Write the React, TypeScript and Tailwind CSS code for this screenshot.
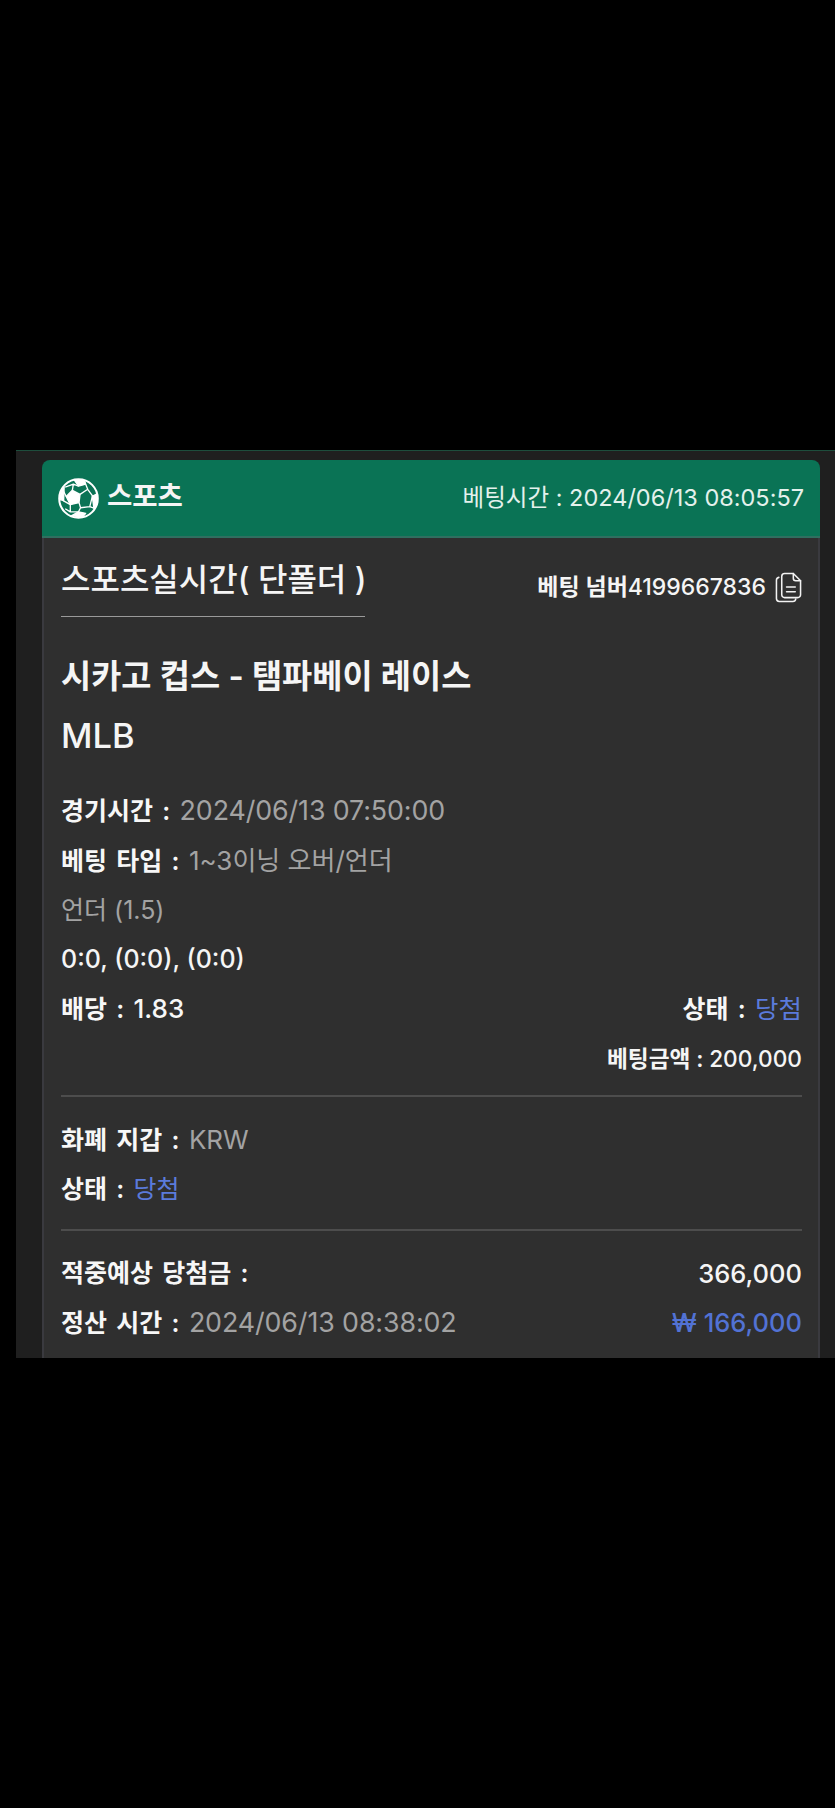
function BallIcon() {
  return (
    <svg viewBox="0 0 40 40" className="w-[41px] h-[41px]" fill="#ffffff" stroke="#ffffff" strokeWidth="1.3" strokeLinejoin="round">
      <circle cx="20" cy="20" r="18.800" fill="none" strokeWidth="2" />
      <path d="M14 12l7.500 4-1 8-8.500 2-4-8z" />
      <path d="M16 2l10 .5 1 3.500-7 2z" />
      <path d="M38 15.500l.5 9-3.500 5-1.500-11.500z" />
      <path d="M13 37l11 1 3-3.500-7-1.500z" />
      <path d="M3.500 10.500l2.500-1.500-.5 13-3.500-1z" />
      <path fill="none" d="M21.500 16l7.500-5 5 7M29 11l-2-5M33.500 18l-2.500 10-9 1-1.500-5M31 28l4 1.500M22 29l-2 4M12 26v7l8 0M12 33l-5-3M12 26l-7-4M8 18l-3-6M14 12l1-6 5 2M15 6l-8 3" />
    </svg>
  );
}

function CopyIcon() {
  return (
    <svg viewBox="0 0 28 32" className="w-[27px] h-[31px] ml-[9px]" fill="none" stroke="#f2f2f2" strokeWidth="1.6" strokeLinejoin="round" strokeLinecap="round">
      <path d="M10 1.500h9l7.500 7.500v14.500a3 3 0 0 1-3 3H10a3 3 0 0 1-3-3v-19a3 3 0 0 1 3-3z" />
      <path d="M19 1.500v5a2.500 2.500 0 0 0 2.500 2.500h5" />
      <path d="M4 5.500a3 3 0 0 0-2.500 3v19a3 3 0 0 0 3 3h14a3 3 0 0 0 3-2.500" />
      <path d="M12 15.500h9M12 20.500h9" />
    </svg>
  );
}

function Label({ children }: { children: React.ReactNode }) {
  return <span className="font-semibold text-[#f7f7f7] [word-spacing:3px]">{children}</span>;
}

function Value({ children }: { children: React.ReactNode }) {
  return <span className="text-[26.800px] text-[#a3a3a3] tracking-[-0.1px]">{children}</span>;
}

export default function App() {
  return (
    <div className="min-h-[1808px] bg-black pt-[450px] pl-[16px] font-['Inter','Noto_Sans_CJK_KR',sans-serif] text-[25px] text-[#f5f5f5]">
      <div className="h-[908px] overflow-hidden bg-[#1f1f1f] border-t border-[#1d4d3c] pt-[9px] pl-[26px] pr-[15px]">
        <div className="rounded-t-[8px] bg-[#0a7355] h-[78px] border-b-2 border-[#2f6f60] flex items-center justify-between pl-[16px] pr-[16px]">
          <div className="flex items-center gap-[8px]">
            <BallIcon />
            <span className="text-[27.500px] font-semibold -mt-[2px]">스포츠</span>
          </div>
          <span className="text-[23.500px] text-[#e4f1ec]">베팅시간 : 2024/06/13 08:05:57</span>
        </div>

        <div className="bg-[#2f2f2f] border-x-2 border-[#3a3a3f] h-[900px] pl-[17px] pr-[16px]">
          <div className="flex items-start justify-between">
            <div className="w-[304px] h-[79px] border-b border-[#9a9a9a] text-[32px] font-medium leading-[79px] pt-[2px] whitespace-nowrap box-border">
              스포츠실시간( 단폴더 )
            </div>
            <div className="flex items-center mt-[32px] text-[23px] font-semibold">
              베팅 넘버<span className="font-medium">4199667836</span>
              <CopyIcon />
            </div>
          </div>

          <div className="mt-[29px] text-[32.800px] font-semibold leading-[60px] whitespace-nowrap">시카고 컵스 - 탬파베이 레이스</div>
          <div className="text-[34.500px] font-medium leading-[60px]">MLB</div>

          <div className="mt-[20px] leading-[49px]">
            <div><Label>경기시간 : </Label><Value>2024/06/13 07:50:00</Value></div>
            <div><Label>베팅 타입 : </Label><span className="text-[26px] text-[#a3a3a3]">1~3이닝 오버/언더</span></div>
            <div className="text-[#a3a3a3]">언더 (1.5)</div>
            <div className="font-medium">0:0, (0:0), (0:0)</div>
            <div className="flex justify-between">
              <div><Label>배당 : </Label><span className="font-medium text-[26px] text-[#f7f7f7]">1.83</span></div>
              <div className="[word-spacing:1px]"><Label>상태 :  </Label><span className="text-[#5b7bdc] text-[25.500px]">당첨</span></div>
            </div>
            <div className="text-right text-[22.700px] font-semibold">베팅금액 : <span className="font-medium">200,000</span></div>
          </div>

          <div className="mt-[12px] border-t-2 border-[#4d4d4d] pt-[18px] pb-[15px] leading-[49px]">
            <div><Label>화폐 지갑 : </Label><span className="text-[26px] text-[#a3a3a3]">KRW</span></div>
            <div><Label>상태 : </Label><span className="text-[#5b7bdc]">당첨</span></div>
          </div>

          <div className="border-t-2 border-[#4d4d4d] pt-[18px] leading-[49px]">
            <div className="flex justify-between">
              <Label>적중예상 당첨금 :</Label>
              <span className="font-medium text-[25.500px]">366,000</span>
            </div>
            <div className="flex justify-between">
              <div><Label>정산 시간 : </Label><Value>2024/06/13 08:38:02</Value></div>
              <span className="font-medium text-[25.500px] text-[#5272d4]">₩ 166,000</span>
            </div>
          </div>
        </div>
      </div>
    </div>
  );
}
